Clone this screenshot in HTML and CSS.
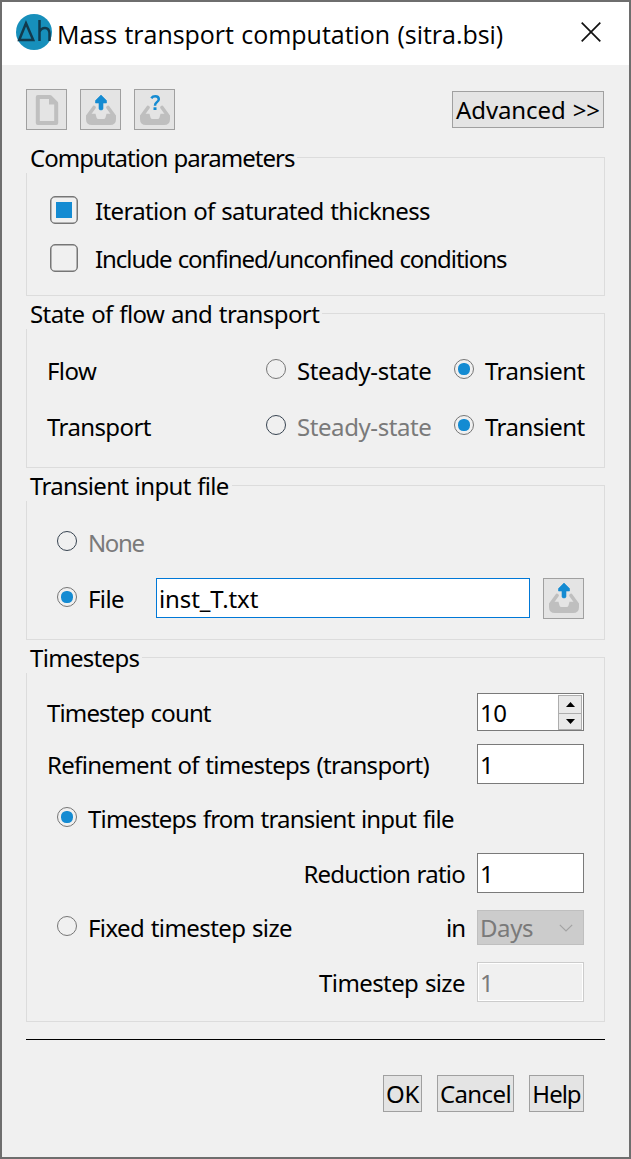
FILE: index.html
```html
<!DOCTYPE html>
<html lang="en">
<head>
<meta charset="utf-8">
<title>Mass transport computation (sitra.bsi)</title>
<link rel="stylesheet" href="styles.css">
</head>
<body>
<svg width="0" height="0" class="defs">
  <symbol id="tray" viewBox="0 0 30 30">
    <path d="M8 12.5 2.2 20.5M22 12.5 27.8 20.5" stroke="#bfbfbf" stroke-width="3.6" stroke-linecap="round" fill="none"/>
    <path d="M0 20.5 3 18.8H9.5L10.5 22.5Q11 24 12.5 24H17.5Q19 24 19.5 22.5L20.5 18.8H27L30 20.5V24Q30 30 24 30H6Q0 30 0 24Z" fill="#bfbfbf"/>
  </symbol>
  <symbol id="upload" viewBox="0 0 30 30">
    <use href="#tray"/>
    <path d="M15 0 20.5 5.5V8H17V13.5Q17 15 15 15T13 13.5V8H9.5V5.5Z" fill="#148bd2" stroke="#148bd2" stroke-width=".6" stroke-linejoin="round"/>
  </symbol>
</svg>
<main class="window">
  <header class="titlebar">
    <svg class="logo" viewBox="0 0 36 36"><circle cx="18" cy="18" r="18" fill="#178fbb"/><path d="M3.2 26 10 9.2 17.2 26ZM23.5 6V27M23.5 18Q25 14 29 14T33.5 19V27" fill="none" stroke="#123a4d" stroke-width="2.5"/></svg>
    <h1 class="title">Mass transport computation (sitra.bsi)</h1>
    <svg class="close" viewBox="0 0 20 20"><path d="M.7.7 19.3 19.3M19.3.7.7 19.3" stroke="#111" stroke-width="1.7"/></svg>
  </header>
  <div class="content">
    <div class="toolbar">
      <button class="tool"><svg viewBox="0 0 30 30"><path d="M5.8 2H18L24.2 8.2V28H5.8Z" fill="none" stroke="#bfbfbf" stroke-width="4" stroke-linejoin="round"/><path d="M17 1V9.5H25Z" fill="#bfbfbf"/></svg></button>
      <button class="tool"><svg><use href="#upload"/></svg></button>
      <button class="tool"><svg viewBox="0 0 30 30"><use href="#tray"/><path d="M11.3 3.2Q12.7 1.3 15.3 1.3 18.8 1.3 18.8 4.3 18.8 6 16.8 7.3 15 8.5 15 10.7" fill="none" stroke="#148bd2" stroke-width="2.5"/><rect x="13.5" y="12.3" width="3" height="2.7" fill="#148bd2"/></svg></button>
      <button class="push advanced">Advanced &gt;&gt;</button>
    </div>

    <section class="group params">
      <h2>Computation parameters</h2>
      <div class="row"><i class="check on"></i><span class="iteration">Iteration of saturated thickness</span></div>
      <div class="row"><i class="check"></i><span class="include">Include confined/unconfined conditions</span></div>
    </section>

    <section class="group state">
      <h2>State of flow and transport</h2>
      <div class="row"><span class="name">Flow</span><i class="radio"></i><span class="steady">Steady-state</span><i class="radio on"></i><span class="transient">Transient</span></div>
      <div class="row"><span class="name">Transport</span><i class="radio dark"></i><span class="steady off">Steady-state</span><i class="radio on"></i><span class="transient">Transient</span></div>
    </section>

    <section class="group input">
      <h2>Transient input file</h2>
      <div class="row"><i class="radio dark"></i><span class="none off">None</span></div>
      <div class="row"><i class="radio on"></i><span class="filelabel">File</span><div class="field file"><span>inst_T.txt</span></div><button class="tool"><svg><use href="#upload"/></svg></button></div>
    </section>

    <section class="group steps">
      <h2>Timesteps</h2>
      <div class="row count"><span>Timestep count</span><div class="field spin"><span>10</span><div class="arrows"><b><svg viewBox="0 0 9 5"><path d="M0 5 4.5 0 9 5Z"/></svg></b><b><svg viewBox="0 0 9 5"><path d="M0 0H9L4.5 5Z"/></svg></b></div></div></div>
      <div class="row refine"><span>Refinement of timesteps (transport)</span><div class="field"><span>1</span></div></div>
      <div class="row from"><i class="radio on"></i><span>Timesteps from transient input file</span></div>
      <div class="row ratio"><span>Reduction ratio</span><div class="field"><span>1</span></div></div>
      <div class="row fixed"><i class="radio"></i><span>Fixed timestep size</span><span class="in">in</span><div class="field select"><span>Days</span><svg viewBox="0 0 14 8"><path d="M.8.8 7 7 13.2.8" fill="none" stroke="#a3a3a3" stroke-width="1.2"/></svg></div></div>
      <div class="row size"><span>Timestep size</span><div class="field disabled"><span>1</span></div></div>
    </section>

    <hr>
    <footer class="actions">
      <button class="push ok">OK</button>
      <button class="push cancel">Cancel</button>
      <button class="push help">Help</button>
    </footer>
  </div>
</main>
</body>
</html>
```
FILE: styles.css
```css
* { box-sizing: border-box; }

body {
  margin: 0;
  font: 24px/32px "Noto Sans", "Open Sans", sans-serif;
  color: #000;
  letter-spacing: -.6px;
  word-spacing: 1px;
}

span, h1, h2 { white-space: nowrap; }
svg { display: block; }
.defs { position: absolute; }

.window {
  width: 631px;
  height: 1159px;
  border: 2px solid #6e6e6e;
  background: #f0f0f0;
}

.titlebar {
  display: flex;
  height: 63px;
  padding-left: 14px;
  background: #fff;
}

.logo { width: 36px; height: 36px; margin-top: 12px; }

.title {
  margin: 16px 0 0 5px;
  font: 25px/32px "Open Sans", "Noto Sans", sans-serif;
  letter-spacing: -.04px;
}

.close { width: 20px; height: 20px; margin: 20px 28px 0 auto; }

.content { padding: 24px 24px 0; }

.toolbar {
  display: flex;
  gap: 13px;
  height: 41px;
  margin-bottom: 27px;
}

button {
  padding: 0;
  border: 1px solid #a0a0a0;
  border-radius: 0;
  background: #e4e4e4;
  font: inherit;
  color: inherit;
  letter-spacing: inherit;
  word-spacing: inherit;
}

.tool { width: 41px; height: 41px; padding: 4px; flex: none; }
.tool svg { width: 30px; height: 30px; margin-left: .5px; }

.push { height: 37px; line-height: 35px; display: flex; justify-content: center; }
.advanced { width: 152px; margin: 2px 1px 0 auto; letter-spacing: -.1px; }

.group {
  width: 579px;
  margin-bottom: 17px;
  border: 1px solid #dcdcdc;
}

.group h2 {
  width: fit-content;
  height: 31px;
  margin: -16px 0 0 -1px;
  padding: 0 3px 0 4px;
  background: #f0f0f0;
  font: inherit;
}

.row { display: flex; align-items: center; }

.params { height: 139px; }
.params h2 { margin-bottom: 13px; letter-spacing: -.98px; }
.params .row { height: 48px; padding-left: 23px; gap: 17px; }
.params span { padding-top: 2px; }
.iteration { letter-spacing: -.65px; }
.include { letter-spacing: -1.05px; }

.check {
  display: grid;
  place-items: center;
  width: 28px;
  height: 28px;
  border: 1.5px solid #767676;
  border-radius: 5px;
  box-shadow: inset 0 0 0 .5px #767676;
}

.check.on::before { content: ""; width: 16px; height: 16px; background: #148bd2; }

.radio {
  display: grid;
  place-items: center;
  flex: none;
  width: 20px;
  height: 20px;
  border: 1px solid #767676;
  border-radius: 50%;
}

.radio.dark { border-color: #374350; }
.radio.on::before { content: ""; width: 12px; height: 12px; border-radius: 45%; background: #148bd2; }
.radio + span { margin-left: 11px; }
.off { color: #7a7a7a; }

.state, .input { height: 155px; }
.state h2, .input h2 { margin-bottom: 12px; }
.input h2 { letter-spacing: -.7px; }
.state .row, .input .row { height: 56px; }
.state .row > span, .input .row > span { padding-top: 3px; }
.state .row { padding-left: 20px; }
.state .name { width: 219px; }
.state .steady { width: 157px; letter-spacing: -.42px; }
.transient { letter-spacing: -.55px; }
.input .row { padding-left: 30px; }
.none { letter-spacing: -1.4px; }
.filelabel { width: 68px; }

.field {
  display: flex;
  align-items: center;
  width: 107px;
  height: 40px;
  padding: 2px 0 0 2px;
  border: 1px solid #7a7a7a;
  background: #fff;
}

.file { width: 374px; margin: 1px 13px 0 0; border-color: #0078d7; letter-spacing: -.1px; }
.file + .tool { margin-top: 2px; }

.steps { height: 365px; }
.steps h2 { margin-bottom: 20px; letter-spacing: -.68px; }
.steps .row { padding: 0 20px; }
.steps .field { margin-left: auto; }
.row.count { height: 38px; margin-bottom: 13px; letter-spacing: -.85px; }
.row.refine, .row.ratio, .row.size { height: 40px; }
.row.refine { letter-spacing: -.69px; }
.row.count > span, .row.refine > span { padding-top: 2px; }
.steps .row.from { height: 69px; padding: 0 0 4px 30px; letter-spacing: -.8px; }
.from > span { padding-top: 4px; }
.row.ratio, .row.size { justify-content: flex-end; }
.row.ratio { letter-spacing: -.78px; }
.row.ratio .field, .row.size .field { margin-left: 12px; }
.row.ratio > span, .row.size > span { padding-top: 2px; }
.steps .row.fixed { height: 35px; margin: 17px 0; padding-left: 30px; }
.fixed .radio { margin-bottom: 3px; }
.fixed > span { padding-top: 1px; }
.fixed .in { margin-left: auto; letter-spacing: -1px; }
.fixed .field { margin-left: 12px; }

.field.spin { height: 38px; padding: 0 1px 0 2px; letter-spacing: -.6px; }
.spin > span { padding-top: 2px; }

.arrows {
  display: grid;
  grid-template-rows: 17px 16px;
  width: 24px;
  height: 35px;
  margin-left: auto;
  border: 1px solid #adadad;
  background: #e9e9e9;
}

.arrows b { display: grid; place-items: center; }
.arrows b + b { border-top: 1px solid #adadad; }
.arrows svg { width: 9px; height: 5px; }

.field.select {
  height: 35px;
  padding: 1px 10px 0 2px;
  justify-content: space-between;
  border-color: #bfbfbf;
  background: #ccc;
  color: #7a7a7a;
  letter-spacing: -.4px;
}

.select svg { width: 14px; height: 8px; }

.field.disabled {
  border-color: #ccc;
  box-shadow: inset 0 0 0 1px #fff;
  background: #f0f0f0;
  color: #7a7a7a;
}

hr { height: 1px; margin: 0; border: 0; background: #000; }

.actions {
  display: flex;
  justify-content: flex-end;
  gap: 15px;
  padding: 35px 21px 0 0;
}

.ok { width: 39px; letter-spacing: -.3px; }
.cancel { width: 77px; }
.help { width: 55px; letter-spacing: -1px; }
```
